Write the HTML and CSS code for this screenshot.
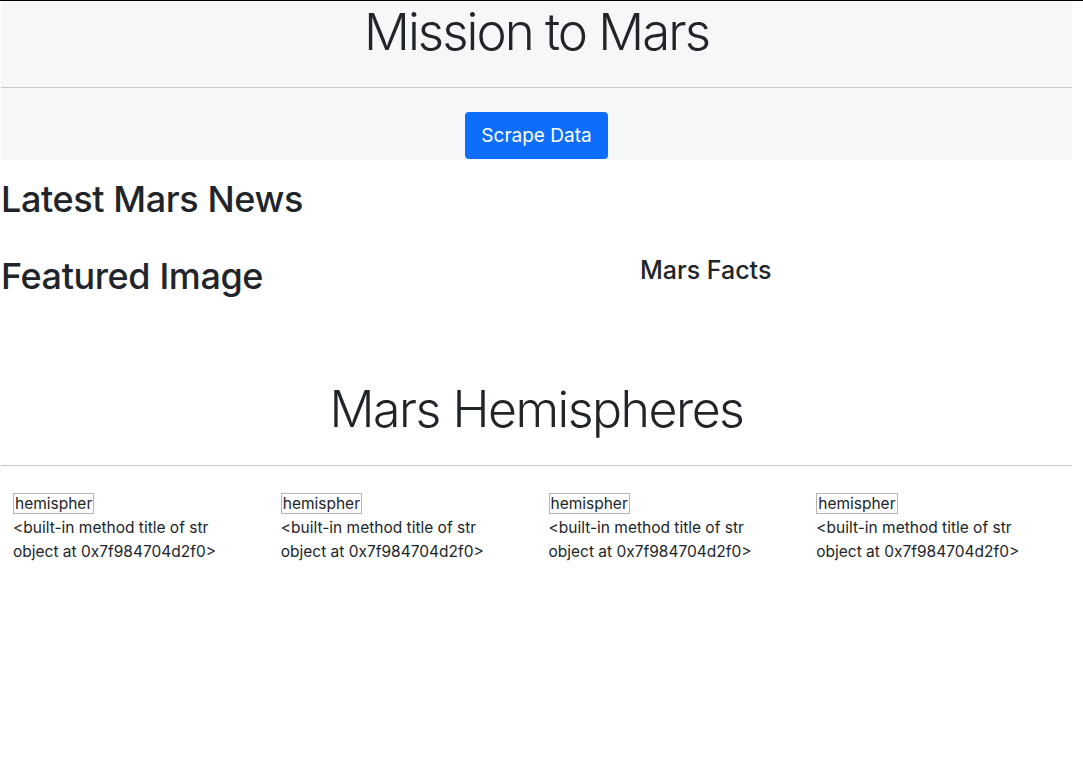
FILE: index.html
```html
<!DOCTYPE html>
<html lang="en">
<head>
<meta charset="utf-8">
<title>Mission to Mars</title>
<link rel="stylesheet" href="styles.css">
</head>
<body>
<div class="page">
  <header class="jumbotron">
    <h1 class="display">Mission to Mars</h1>
    <hr class="rule">
    <div class="actions"><a class="btn" href="#">Scrape Data</a></div>
  </header>

  <section class="news">
    <h2 class="section-title">Latest Mars News</h2>
  </section>

  <section class="feature-row">
    <div class="feature-col">
      <h2 class="section-title">Featured Image</h2>
    </div>
    <div class="facts-col">
      <h3 class="facts-title">Mars Facts</h3>
    </div>
  </section>

  <section class="hemis">
    <h2 class="display hemis-title">Mars Hemispheres</h2>
    <hr class="rule">
    <div class="hemis-grid">
      <div class="hemi">
        <span class="thumb">hemispher</span>
        <p class="caption">&lt;built-in method title of str object at 0x7f984704d2f0&gt;</p>
      </div>
      <div class="hemi">
        <span class="thumb">hemispher</span>
        <p class="caption">&lt;built-in method title of str object at 0x7f984704d2f0&gt;</p>
      </div>
      <div class="hemi">
        <span class="thumb">hemispher</span>
        <p class="caption">&lt;built-in method title of str object at 0x7f984704d2f0&gt;</p>
      </div>
      <div class="hemi">
        <span class="thumb">hemispher</span>
        <p class="caption">&lt;built-in method title of str object at 0x7f984704d2f0&gt;</p>
      </div>
    </div>
  </section>
</div>
</body>
</html>
```

FILE: styles.css
```css
html, body {
  margin: 0;
  padding: 0;
  background: #fff;
}
body {
  border-top: 1px solid #000;
  font-family: Inter, "Liberation Sans", sans-serif;
  font-size: 15.5px;
  line-height: 24px;
  color: #212529;
}
.page {
  width: 1071px;
  margin-left: 1px;
}
.jumbotron {
  background: #f6f7f9;
  height: 159px;
  display: flex;
  flex-direction: column;
  align-items: center;
}
.display {
  margin: 0;
  font-weight: 300;
  font-size: 51px;
  line-height: 62px;
  letter-spacing: -2px;
  text-align: center;
}
.rule {
  align-self: stretch;
  margin: 24px 0 0;
  border: 0;
  border-top: 1px solid #c6c7c9;
  height: 0;
}
.actions {
  margin-top: 24px;
}
.btn {
  display: inline-block;
  background: #0d6efd;
  color: #fff;
  text-decoration: none;
  font-size: 19px;
  line-height: 30px;
  padding: 8.5px 16px;
  border-radius: 4px;
  font-weight: 400;
}
.section-title {
  margin: 0;
  font-weight: 500;
  font-size: 36px;
  line-height: 46px;
  letter-spacing: -0.4px;
}
.news {
  padding-top: 16px;
}
.feature-row {
  display: flex;
  padding-top: 31px;
}
.feature-col {
  width: 639px;
}
.facts-col {
  flex: 1;
}
.facts-title {
  margin: 2px 0 0;
  font-weight: 500;
  font-size: 25px;
  line-height: 30px;
}
.hemis {
  padding-top: 77px;
}
.hemis-title {
  font-size: 50px;
  line-height: 66px;
  letter-spacing: -1.5px;
}
.hemis .rule {
  margin-top: 23px;
}
.hemis-grid {
  display: grid;
  grid-template-columns: repeat(4, 1fr);
  padding-top: 26px;
}
.hemi {
  padding: 0 12px;
}
.thumb {
  display: inline-block;
  border: 1px solid #b5b5b5;
  line-height: 19px;
  padding: 0 1px;
}
.caption {
  margin: 0;
}
```
